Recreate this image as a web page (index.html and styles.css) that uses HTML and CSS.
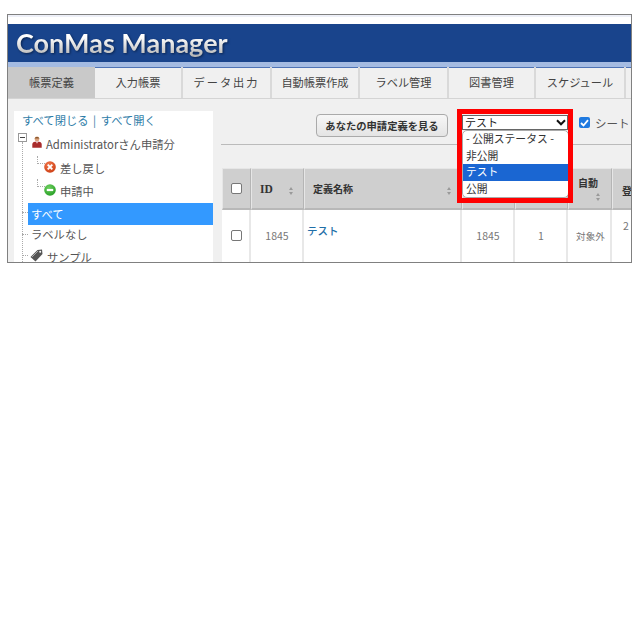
FILE: index.html
```html
<!DOCTYPE html>
<html lang="ja">
<head>
<meta charset="utf-8">
<title>ConMas Manager</title>
<link rel="stylesheet" href="styles.css">
</head>
<body>
<div class="frame">
  <div class="topstrip"></div>
  <header class="banner"><span class="logo">ConMas Manager</span></header>
  <nav class="nav">
    <a class="tab tab-active w87">帳票定義</a>
    <a class="tab w88">入力帳票</a>
    <a class="tab w89 tab-wide">データ出力</a>
    <a class="tab w88">自動帳票作成</a>
    <a class="tab w89">ラベル管理</a>
    <a class="tab w87">図書管理</a>
    <a class="tab w90">スケジュール</a>
    <a class="tab tab-rest"></a>
  </nav>
  <div class="main">
    <aside class="side">
      <div class="side-links">すべて閉じる | すべて開く</div>
      <div class="tree">
        <div class="row row-root">
          <svg class="expander" width="9" height="9" viewBox="0 0 9 9"><rect x=".5" y=".5" width="8" height="8" fill="#fff" stroke="#999"/><path d="M2 4.500h5" stroke="#444"/></svg>
          <svg class="ico-user" width="10" height="12" viewBox="0 0 10 12"><circle cx="5" cy="3" r="2.400" fill="#dca27c"/><path d="M2.600 2.600C2.800.4 7.200.4 7.400 2.600z" fill="#8a5a30"/><path d="M.3 11.700V8C.3 6.300 2.400 5.500 5 5.500s4.700.8 4.700 2.500v3.700z" fill="#a92c2c"/><path d="M4 5.500h2L5 7.800z" fill="#fff"/></svg>
          <span>Administratorさん申請分</span>
        </div>
        <div class="row row-child row-first">
          <svg class="ico" width="12" height="12" viewBox="0 0 12 12"><defs><radialGradient id="r" cx=".4" cy=".3" r=".8"><stop offset="0" stop-color="#f2764a"/><stop offset="1" stop-color="#c93a10"/></radialGradient></defs><circle cx="6" cy="6" r="5.800" fill="url(#r)"/><path d="M3.700 3.700l4.600 4.600m0-4.600L3.700 8.300" stroke="#fff" stroke-width="1.900"/></svg>
          <span>差し戻し</span>
        </div>
        <div class="row row-child row-last">
          <svg class="ico" width="12" height="12" viewBox="0 0 12 12"><defs><radialGradient id="g" cx=".4" cy=".3" r=".8"><stop offset="0" stop-color="#6fd060"/><stop offset="1" stop-color="#209a20"/></radialGradient></defs><circle cx="6" cy="6" r="5.800" fill="url(#g)"/><path d="M2.800 6h6.400" stroke="#fff" stroke-width="2.200"/></svg>
          <span>申請中</span>
        </div>
        <div class="row row-top row-sel">すべて</div>
        <div class="row row-top row-none">ラベルなし</div>
        <div class="row row-top row-tag">
          <svg class="ico-tag" width="13" height="13" viewBox="0 0 13 13"><path d="M.5 8L7.500 1l4.500-.5.500 4.500L5.500 12.500z" fill="#555"/><path d="M2 8l6-6" stroke="#aaa"/><circle cx="10.200" cy="2.800" r="1" fill="#fff"/></svg>
          <span>サンプル</span>
        </div>
      </div>
    </aside>
    <section class="content">
      <div class="toolbar">
        <button class="btn">あなたの申請定義を見る</button>
        <div class="toolbar-right">
          <div class="select-closed"><span>テスト</span><svg width="10" height="7" viewBox="0 0 10 7"><path d="M1 1.300l4 4 4-4" fill="none" stroke="#111" stroke-width="2"/></svg></div>
          <label class="sheet"><span class="check-on"><svg width="9" height="8" viewBox="0 0 9 8"><path d="M1 4l2.500 2.500L8 1.200" fill="none" stroke="#fff" stroke-width="1.800"/></svg></span>シート</label>
        </div>
      </div>
      <div class="grid">
        <div class="th th-check"><span class="box"></span></div>
        <div class="th th-id"><b>ID</b><span class="sort"></span></div>
        <div class="th th-name"><b class="plain">定義名称</b><span class="sort"></span></div>
        <div class="th"></div>
        <div class="th"></div>
        <div class="th th-col"><b class="plain">自動</b><span class="sort"></span></div>
        <div class="th th-reg"><b class="plain">登</b></div>
        <div class="td"><span class="box"></span></div>
        <div class="td">1845</div>
        <div class="td td-name"><a>テスト</a></div>
        <div class="td">1845</div>
        <div class="td">1</div>
        <div class="td td-small">対象外</div>
        <div class="td td-reg">2</div>
      </div>
    </section>
    <div class="dropdown">
      <div class="opt">- 公開ステータス -</div>
      <div class="opt">非公開</div>
      <div class="opt opt-sel">テスト</div>
      <div class="opt">公開</div>
    </div>
    <div class="redbox"></div>
  </div>
</div>
</body>
</html>
```
FILE: styles.css
```css
* { box-sizing: border-box; }
html, body { margin: 0; padding: 0; background: #fff; }
body { height: 625px; overflow: hidden; font-family: "Noto Sans CJK JP", "Noto Sans", sans-serif; color: #444; }
.frame { width: 625px; height: 249px; margin: 14px 0 0 7px; border: 1px solid #808080; overflow: hidden; background: #f0f0f0; display: flex; flex-direction: column; }
.topstrip { height: 9px; background: #fff; flex: none; border-top: 2px solid #eef0f8; }
.banner { height: 38px; background: #19448c; flex: none; padding-left: 8px; display: flex; align-items: center; }
.logo { font-family: Lato, sans-serif; font-weight: 700; font-size: 27px; color: transparent; background: linear-gradient(#fff 35%, #b4b4b4 85%); -webkit-background-clip: text; background-clip: text; filter: drop-shadow(1px 1px 1px #0a2450); line-height: 38px; }
.nav { height: 37px; flex: none; display: flex; background: #f0f0f0; border-top: 5px solid #a4bbe2; border-bottom: 1px solid #d4d4d4; box-shadow: inset 0 1px 0 #4e73b5; }
.tab { flex: none; border-right: 2px solid #d9d9d9; font-size: 11.200px; color: #444; display: flex; align-items: center; justify-content: center; padding-bottom: 1px; }
.tab-active { background: #c9c9c9; border-right: 0; }
.tab-wide { letter-spacing: 2px; }
.tab-rest { flex: 1; border-right: 0; }
.w87 { width: 87px; } .w88 { width: 88px; } .w89 { width: 89px; } .w90 { width: 90px; }
.main { position: relative; flex: 1; display: flex; padding: 4px 0 0 0; min-height: 0; }
.side { width: 199px; margin-left: 6px; margin-top: 8px; background: #fff; flex: none; height: 160px; padding: 1px 0 0 8px; }
.side-links { font-size: 11.300px; color: #2f7da8; line-height: 16px; white-space: nowrap; word-spacing: 2px; }
.tree { margin-top: 5px; margin-left: -3px; font-size: 11.300px; color: #555; position: relative; }
.tree::before { content: ""; position: absolute; left: 3px; top: 9px; bottom: 0; border-left: 1px dotted #aaa; }
.row { height: 23px; line-height: 22px; display: flex; align-items: center; white-space: nowrap; position: relative; }
.row-root { height: 22px; padding-left: 13px; gap: 4px; }
.expander { position: absolute; left: -1px; top: 0; z-index: 1; }
.ico-user { flex: none; margin-top: -5px; }
.row-child { margin-left: 5px; padding-left: 20px; gap: 4px; }
.row-first { margin-top: 1px; }
.row-last { margin-bottom: 1px; }
.ico { flex: none; margin-top: -2px; position: relative; }
.row-child::before { content: ""; position: absolute; left: 13px; top: 0; width: 7px; height: 7px; border-left: 1px dotted #aaa; border-bottom: 1px dotted #aaa; }
.row-top { margin-left: 9px; padding-left: 3px; height: 22px; }
.row-top::before { content: ""; position: absolute; left: -6px; top: 9px; width: 6px; border-top: 1px dotted #aaa; }
.row-sel { background: #3399ff; color: #fff; width: 185px; }
.row-none { height: 18px; }
.row-tag { margin-top: 3px; padding-left: 2px; gap: 4px; }
.ico-tag { flex: none; margin-top: -3px; }
.content { flex: 1; min-width: 0; margin-left: 8px; overflow: hidden; }
.toolbar { height: 42px; border-bottom: 1px solid #bbb; display: flex; padding-left: 95px; padding-top: 11px; }
.btn { width: 132px; height: 23px; padding: 0; border: 1px solid #aaa; border-radius: 4px; background: linear-gradient(#f7f7f7, #e4e4e4); font: 700 10.300px "Noto Sans CJK JP", sans-serif; color: #333; flex: none; }
.toolbar-right { margin-left: 14px; margin-top: 1px; display: flex; gap: 11px; height: 15px; align-items: center; }
.select-closed { width: 106px; height: 15px; border: 1px solid #666; background: #fff; font-size: 11px; line-height: 13px; color: #222; display: flex; justify-content: space-between; align-items: center; padding: 0 1px 0 2px; flex: none; }
.sheet { display: flex; align-items: center; gap: 5px; font-size: 11.500px; color: #555; white-space: nowrap; }
.check-on { width: 11px; height: 11px; background: #1f7ae0; border-radius: 2px; display: flex; align-items: center; justify-content: center; flex: none; }
.grid { display: grid; grid-template-columns: 29px 53px 158px 53px 53px 44px 40px; grid-template-rows: 42px 60px; margin-top: 23px; margin-left: 1px; }
.th { background: #cfcfcf; border-right: 1px solid #b5b5b5; border-left: 1px solid #e6e6e6; border-bottom: 2px solid #b8b8b8; border-top: 1px solid #e6e6e6; font-size: 10px; display: flex; align-items: center; position: relative; color: #333; }
.th-check { justify-content: center; }
.box { width: 11px; height: 11px; border: 1px solid #777; border-radius: 2px; background: #fff; display: block; }
.th-id { padding-left: 8px; }
.th-id b { font-family: "Liberation Serif", serif; font-size: 11.500px; }
.th-name { padding-left: 8px; }
.plain { font-weight: 700; }
.sort { position: absolute; right: 12px; top: 18px; width: 0; height: 9px; }
.sort::before, .sort::after { content: ""; position: absolute; left: -2px; border-left: 2.500px solid transparent; border-right: 2.500px solid transparent; }
.sort::before { top: 0; border-bottom: 3px solid #999; }
.sort::after { top: 5px; border-top: 3px solid #999; }
.th-col { align-items: flex-start; padding: 6px 0 0 9px; line-height: 16px; }
.th-col .sort { right: 13px; top: 24px; }
.th-reg { border-right: 0; padding: 4px 0 0 9px; white-space: nowrap; overflow: hidden; }
.td { background: #fff; border-right: 2px solid #e8e8e8; color: #777; font-size: 10.500px; display: flex; align-items: center; justify-content: center; padding: 0 0 9px 1px; }
.td-small { font-size: 9.600px; padding-left: 3px; }
.td-name { justify-content: flex-start; padding: 0 0 19px 3px; font-size: 10.500px; font-weight: 500; }
.td-name a { color: #1f6fa8; }
.td-reg { justify-content: flex-start; padding: 0 0 29px 11px; border-right: 0; }
.dropdown { position: absolute; left: 454px; top: 31px; width: 107px; height: 68px; background: #fff; border: 1px solid #aaa; border-radius: 5px; overflow: hidden; }
.opt { height: 16.500px; line-height: 15px; font-size: 10.800px; color: #333; padding-left: 3px; white-space: nowrap; }
.opt-sel { background: #1a66d2; color: #fff; }
.redbox { position: absolute; left: 449px; top: 10px; width: 116px; height: 94px; border: 5px solid #f00; pointer-events: none; }
```
